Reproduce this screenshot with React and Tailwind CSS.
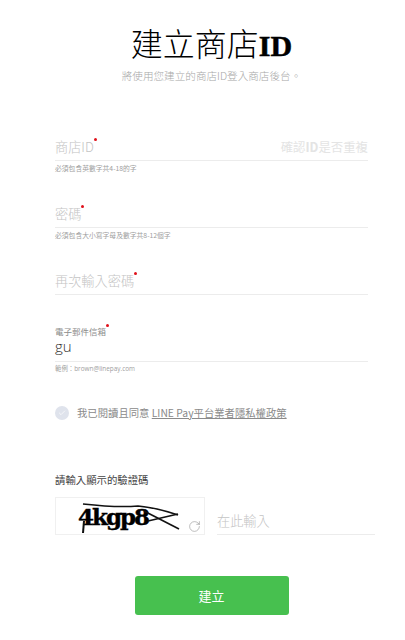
import React from 'react';
import { RotateCw, Check } from 'lucide-react';

const cjk = '"Noto Sans CJK TC", "Liberation Sans", sans-serif';
const serif = '"Liberation Serif", serif';

const Field = ({ label, hint, right }) => {
  return (
    <div>
      <div className="h-[32px] flex items-end justify-between border-b border-[#ececec] pb-[3px]">
        <span className="relative text-[13.2px] leading-[20px] font-light text-[#c4c4c4]">
          {label}
          <span className="absolute -right-[3px] top-[1px] w-[3px] h-[3px] rounded-full bg-[#e0101a]" />
        </span>
        {right}
      </div>
      {hint && <p className="mt-[2px] text-[6.8px] leading-[10px] text-[#a0a0a0]">{hint}</p>}
    </div>
  );
};

const Captcha = () => {
  return (
    <div className="relative w-[150px] h-[38px] border border-[#f0f0f0] overflow-hidden">
      <span className="absolute left-[22px] top-[4px] text-[23px] leading-[30px] font-bold tracking-[-2px] text-black [-webkit-text-stroke:0.4px_black]" style={{ fontFamily: '"DejaVu Serif", serif' }}>
        4kgp8
      </span>
      <svg className="absolute inset-0" width="150" height="38" fill="none" stroke="#111">
        <path d="M27 6 C45 8 70 9 82 8 C95 9 110 13 122 17" strokeWidth="1.6" />
        <path d="M92 23 L122 16" strokeWidth="1.6" />
        <path d="M88 13 L123 31" strokeWidth="1.6" />
        <path d="M28 23 L27 35" strokeWidth="2" />
      </svg>
      <RotateCw className="absolute right-[3px] bottom-[1px] w-[13px] h-[13px] text-[#888]" strokeWidth={1} />
    </div>
  );
};

const App = () => {
  return (
    <div className="w-[405px] h-[640px] bg-white overflow-hidden pl-[55px] pr-[37px]" style={{ fontFamily: cjk }}>
      <div className="pt-[19px] flex flex-col items-center">
        <h1 className="text-[32px] leading-[46px] font-light text-black">
          建立商店<span className="text-[30px] font-bold [-webkit-text-stroke:0.5px_black]" style={{ fontFamily: serif }}>ID</span>
        </h1>
        <p className="text-[10.6px] leading-[14px] font-light text-[#a8a8a8]">將使用您建立的商店ID登入商店後台。</p>
      </div>

      <div className="mt-[46px]">
        <Field
          label="商店ID"
          hint="必須包含英數字共4-18的字"
          right={
            <span className="text-[12.4px] leading-[20px] text-[#e4e4e4]">
              確認<span className="font-bold">ID</span>是否重複
            </span>
          }
        />
      </div>
      <div className="mt-[23px]">
        <Field label="密碼" hint="必須包含大小寫字母及數字共8-12個字" />
      </div>
      <div className="mt-[23px]">
        <Field label="再次輸入密碼" />
      </div>

      <div className="mt-[30px]">
        <div className="border-b border-[#ececec] pb-[6px]">
          <span className="relative text-[8.5px] leading-[12px] text-[#8c8c8c] block w-fit">
            電子郵件信箱
            <span className="absolute -right-[3px] -top-[1px] w-[3px] h-[3px] rounded-full bg-[#e0101a]" />
          </span>
          <p className="text-[15px] leading-[18px] font-light text-[#333]" style={{ fontFamily: '"Open Sans", sans-serif' }}>gu</p>
        </div>
        <p className="mt-[2px] text-[6.4px] leading-[10px] text-[#a0a0a0]" style={{ fontFamily: '"Open Sans", "Noto Sans CJK TC", sans-serif' }}>範例：brown@linepay.com</p>
      </div>

      <div className="mt-[32px] flex items-center gap-[8px]">
        <span className="w-[14px] h-[14px] rounded-full bg-[#dfe3ec] flex items-center justify-center">
          <Check className="w-[8px] h-[8px] text-white" strokeWidth={2} />
        </span>
        <span className="text-[10.35px] leading-[14px] text-[#8a8a8a]">
          我已閱讀且同意 <span className="underline">LINE Pay平台業者隱私權政策</span>
        </span>
      </div>

      <p className="mt-[53px] text-[10.4px] leading-[14px] text-[#444]">請輸入顯示的驗證碼</p>

      <div className="mt-[10px] flex items-stretch gap-[12px] w-[320px]">
        <Captcha />
        <div className="flex-1 flex items-end border-b border-[#ececec] pb-[3px]">
          <span className="text-[13.2px] leading-[20px] font-light text-[#c4c4c4]">在此輸入</span>
        </div>
      </div>

      <div className="mt-[41px] w-[313px] flex justify-center">
        <button className="w-[154px] h-[39px] rounded-[3px] bg-[#47c04f] text-[13px] text-white">建立</button>
      </div>
    </div>
  );
};

export default App;
